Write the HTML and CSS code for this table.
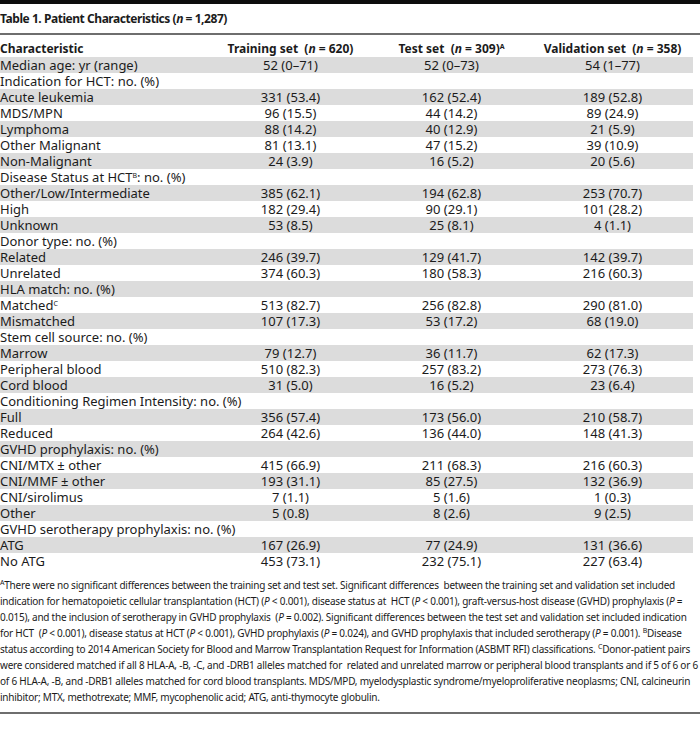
FILE: index.html
```html
<!DOCTYPE html>
<html>
<head>
<meta charset="utf-8">
<link rel="stylesheet" href="styles.css">
</head>
<body>
<div class="page">
  <div class="topbar"></div>
  <h1 class="title">Table 1. Patient Characteristics (<i>n</i> = 1,287)</h1>
  <div class="rule"></div>
  <table class="tbl">
    <colgroup>
      <col class="c-label"><col class="c-num"><col class="c-num"><col class="c-num">
    </colgroup>
    <thead>
      <tr><th class="lbl">Characteristic</th><th>Training set&nbsp; (<i>n</i> = 620)</th><th>Test set&nbsp; (<i>n</i> = 309)<sup>A</sup></th><th>Validation set&nbsp; (<i>n</i> = 358)</th></tr>
    </thead>
    <tbody>
      <tr><td>Median age: yr (range)</td><td>52 (0–71)</td><td>52 (0–73)</td><td>54 (1–77)</td></tr>
      <tr><td>Indication for HCT: no. (%)</td><td></td><td></td><td></td></tr>
      <tr><td>Acute leukemia</td><td>331 (53.4)</td><td>162 (52.4)</td><td>189 (52.8)</td></tr>
      <tr><td>MDS/MPN</td><td>96 (15.5)</td><td>44 (14.2)</td><td>89 (24.9)</td></tr>
      <tr><td>Lymphoma</td><td>88 (14.2)</td><td>40 (12.9)</td><td>21 (5.9)</td></tr>
      <tr><td>Other Malignant</td><td>81 (13.1)</td><td>47 (15.2)</td><td>39 (10.9)</td></tr>
      <tr><td>Non-Malignant</td><td>24 (3.9)</td><td>16 (5.2)</td><td>20 (5.6)</td></tr>
      <tr><td>Disease Status at HCT<sup>B</sup>: no. (%)</td><td></td><td></td><td></td></tr>
      <tr><td>Other/Low/Intermediate</td><td>385 (62.1)</td><td>194 (62.8)</td><td>253 (70.7)</td></tr>
      <tr><td>High</td><td>182 (29.4)</td><td>90 (29.1)</td><td>101 (28.2)</td></tr>
      <tr><td>Unknown</td><td>53 (8.5)</td><td>25 (8.1)</td><td>4 (1.1)</td></tr>
      <tr><td>Donor type: no. (%)</td><td></td><td></td><td></td></tr>
      <tr><td>Related</td><td>246 (39.7)</td><td>129 (41.7)</td><td>142 (39.7)</td></tr>
      <tr><td>Unrelated</td><td>374 (60.3)</td><td>180 (58.3)</td><td>216 (60.3)</td></tr>
      <tr><td>HLA match: no. (%)</td><td></td><td></td><td></td></tr>
      <tr><td>Matched<sup>C</sup></td><td>513 (82.7)</td><td>256 (82.8)</td><td>290 (81.0)</td></tr>
      <tr><td>Mismatched</td><td>107 (17.3)</td><td>53 (17.2)</td><td>68 (19.0)</td></tr>
      <tr><td>Stem cell source: no. (%)</td><td></td><td></td><td></td></tr>
      <tr><td>Marrow</td><td>79 (12.7)</td><td>36 (11.7)</td><td>62 (17.3)</td></tr>
      <tr><td>Peripheral blood</td><td>510 (82.3)</td><td>257 (83.2)</td><td>273 (76.3)</td></tr>
      <tr><td>Cord blood</td><td>31 (5.0)</td><td>16 (5.2)</td><td>23 (6.4)</td></tr>
      <tr><td>Conditioning Regimen Intensity: no. (%)</td><td></td><td></td><td></td></tr>
      <tr><td>Full</td><td>356 (57.4)</td><td>173 (56.0)</td><td>210 (58.7)</td></tr>
      <tr><td>Reduced</td><td>264 (42.6)</td><td>136 (44.0)</td><td>148 (41.3)</td></tr>
      <tr><td>GVHD prophylaxis: no. (%)</td><td></td><td></td><td></td></tr>
      <tr><td>CNI/MTX ± other</td><td>415 (66.9)</td><td>211 (68.3)</td><td>216 (60.3)</td></tr>
      <tr><td>CNI/MMF ± other</td><td>193 (31.1)</td><td>85 (27.5)</td><td>132 (36.9)</td></tr>
      <tr><td>CNI/sirolimus</td><td>7 (1.1)</td><td>5 (1.6)</td><td>1 (0.3)</td></tr>
      <tr><td>Other</td><td>5 (0.8)</td><td>8 (2.6)</td><td>9 (2.5)</td></tr>
      <tr><td>GVHD serotherapy prophylaxis: no. (%)</td><td></td><td></td><td></td></tr>
      <tr><td>ATG</td><td>167 (26.9)</td><td>77 (24.9)</td><td>131 (36.6)</td></tr>
      <tr><td>No ATG</td><td>453 (73.1)</td><td>232 (75.1)</td><td>227 (63.4)</td></tr>
    </tbody>
  </table>
  <p class="notes"><sup>A</sup>There were no significant differences between the training set and test set. Significant differences&nbsp; between the training set and validation set included<br>indication for hematopoietic cellular transplantation (HCT) (<i>P</i> &lt; 0.001), disease status at&nbsp; HCT (<i>P</i> &lt; 0.001), graft-versus-host disease (GVHD) prophylaxis (<i>P</i> =<br>0.015), and the inclusion of serotherapy in GVHD prophylaxis&nbsp; (<i>P</i> = 0.002). Significant differences between the test set and validation set included indication<br>for HCT&nbsp; (<i>P</i> &lt; 0.001), disease status at HCT (<i>P</i> &lt; 0.001), GVHD prophylaxis (<i>P</i> = 0.024), and GVHD prophylaxis that included serotherapy (<i>P</i> = 0.001). <sup>B</sup>Disease<br>status according to 2014 American Society for Blood and Marrow Transplantation Request for Information (ASBMT RFI) classifications. <sup>C</sup>Donor-patient pairs<br>were considered matched if all 8 HLA-A, -B, -C, and -DRB1 alleles matched for&nbsp; related and unrelated marrow or peripheral blood transplants and if 5 of 6 or 6<br>of 6 HLA-A, -B, and -DRB1 alleles matched for cord blood transplants. MDS/MPD, myelodysplastic syndrome/myeloproliferative neoplasms; CNI, calcineurin<br>inhibitor; MTX, methotrexate; MMF, mycophenolic acid; ATG, anti-thymocyte globulin.</p>
  <div class="rule bottom"></div>
</div>
</body>
</html>
```

FILE: styles.css
```css
html, body {
  margin: 0;
  padding: 0;
  background: #ffffff;
}
body {
  font-family: "Noto Sans", "DejaVu Sans", sans-serif;
  font-stretch: condensed;
  color: #1b1b1b;
}
.page {
  width: 700px;
}
.topbar {
  height: 4px;
  background: #0d0d0d;
}
.title {
  margin: 7px 0 6px 0;
  font-size: 12px;
  line-height: 16px;
  font-weight: bold;
  letter-spacing: -0.45px;
}
.rule {
  height: 2px;
  background: #6e6e6e;
}
.tbl {
  width: 693px;
  border-collapse: collapse;
  table-layout: fixed;
  margin-top: 6px;
  font-size: 13px;
}
.c-label { width: 210px; }
.c-num { width: 161px; }
.tbl th, .tbl td {
  padding: 0;
  height: 16px;
  line-height: 16px;
  text-align: center;
  white-space: nowrap;
  font-weight: normal;
}
.tbl th {
  font-weight: bold;
  font-size: 12px;
}
.tbl th.lbl, .tbl td:first-child {
  text-align: left;
}
.tbl tbody tr:nth-child(odd) {
  background: #dcdcdc;
}
sup {
  font-size: 7px;
  line-height: 0;
  vertical-align: 4px;
}
.notes {
  margin: 8px 0 7px 0;
  font-size: 10px;
  line-height: 16px;
  letter-spacing: -0.23px;
  white-space: nowrap;
}
.bottom {
  height: 2px;
}
```
